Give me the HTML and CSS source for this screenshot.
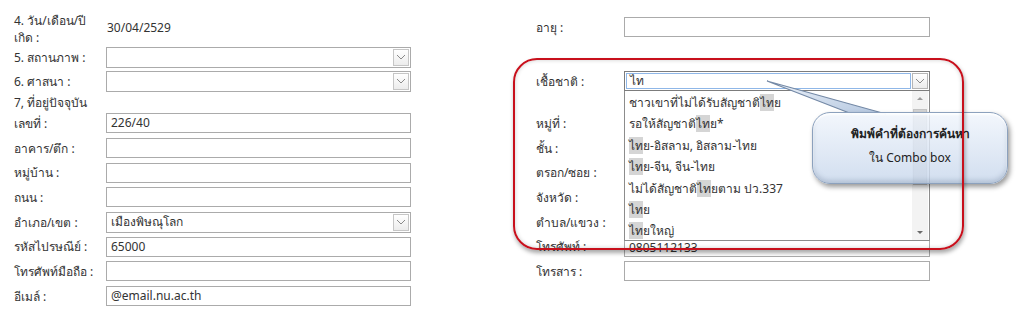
FILE: index.html
```html
<!DOCTYPE html>
<html lang="th">
<head>
    <meta charset="UTF-8">
    <title>ข้อมูลส่วนตัว</title>
    <link rel="stylesheet" href="styles.css">
</head>
<body>
    <div class="page">
        <div class="form">
            <!-- row: birth date / age -->
            <div class="lbl two-line">4. วัน/เดือน/ปี<br>เกิด :</div>
            <div class="val">30/04/2529</div>
            <div></div>
            <div class="lbl">อายุ :</div>
            <div class="field"></div>

            <!-- row: status -->
            <div class="lbl">5. สถานภาพ :</div>
            <div class="field select"><span></span><span class="arrow"><svg width="10" height="6" viewBox="0 0 10 6"><polyline points="1,1 5,5 9,1" fill="none" stroke="#8a8a8a" stroke-width="1"/></svg></span></div>
            <div></div><div></div><div></div>

            <!-- row: religion / nationality -->
            <div class="lbl">6. ศาสนา :</div>
            <div class="field select"><span></span><span class="arrow"><svg width="10" height="6" viewBox="0 0 10 6"><polyline points="1,1 5,5 9,1" fill="none" stroke="#8a8a8a" stroke-width="1"/></svg></span></div>
            <div></div>
            <div class="lbl">เชื้อชาติ :</div>
            <div class="combo">
                <div class="combo-text">ไท</div>
                <span class="arrow"><svg width="10" height="6" viewBox="0 0 10 6"><polyline points="1,1 5,5 9,1" fill="none" stroke="#8a8a8a" stroke-width="1"/></svg></span>
                <div class="combo-list">
                    <ul class="items">
                        <li>ชาวเขาที่ไม่ได้รับสัญชาติ<mark>ไท</mark>ย</li>
                        <li>รอให้สัญชาติ<mark>ไท</mark>ย*</li>
                        <li><mark>ไท</mark>ย-อิสลาม, อิสลาม-ไทย</li>
                        <li><mark>ไท</mark>ย-จีน, จีน-ไทย</li>
                        <li>ไม่ได้สัญชาติ<mark>ไท</mark>ยตาม ปว.337</li>
                        <li><mark>ไท</mark>ย</li>
                        <li><mark>ไท</mark>ยใหญ่</li>
                    </ul>
                    <div class="scrollbar">
                        <span class="sb-up"></span>
                        <span class="sb-thumb"></span>
                        <span class="sb-down"></span>
                    </div>
                </div>
            </div>

            <!-- address heading -->
            <div class="lbl heading">7, ที่อยู่ปัจจุบัน</div>
            <div></div><div></div><div></div>

            <div class="lbl">เลขที่ :</div>
            <div class="field">226/40</div>
            <div></div>
            <div class="lbl">หมู่ที่ :</div>
            <div class="field"></div>

            <div class="lbl">อาคาร/ตึก :</div>
            <div class="field"></div>
            <div></div>
            <div class="lbl">ชั้น :</div>
            <div class="field"></div>

            <div class="lbl">หมู่บ้าน :</div>
            <div class="field"></div>
            <div></div>
            <div class="lbl">ตรอก/ซอย :</div>
            <div class="field"></div>

            <div class="lbl">ถนน :</div>
            <div class="field"></div>
            <div></div>
            <div class="lbl">จังหวัด :</div>
            <div class="field"></div>

            <div class="lbl">อำเภอ/เขต :</div>
            <div class="field select"><span>เมืองพิษณุโลก</span><span class="arrow"><svg width="10" height="6" viewBox="0 0 10 6"><polyline points="1,1 5,5 9,1" fill="none" stroke="#8a8a8a" stroke-width="1"/></svg></span></div>
            <div></div>
            <div class="lbl">ตำบล/แขวง :</div>
            <div class="field"></div>

            <div class="lbl">รหัสไปรษณีย์ :</div>
            <div class="field">65000</div>
            <div></div>
            <div class="lbl">โทรศัพท์ :</div>
            <div class="field low">0805112133</div>

            <div class="lbl">โทรศัพท์มือถือ :</div>
            <div class="field"></div>
            <div></div>
            <div class="lbl">โทรสาร :</div>
            <div class="field"></div>

            <div class="lbl">อีเมล์ :</div>
            <div class="field">@email.nu.ac.th</div>
            <div></div><div></div><div></div>
        </div>

        <!-- annotation overlay -->
        <svg class="tail" width="140" height="44" viewBox="0 0 140 44">
            <defs>
                <linearGradient id="tailFill" x1="0" y1="0" x2="1" y2="1">
                    <stop offset="0" stop-color="#eef3fa"/>
                    <stop offset="1" stop-color="#b3c6df"/>
                </linearGradient>
            </defs>
            <path d="M7 5 L92 38 L126 38 Z" fill="url(#tailFill)"/>
            <path d="M92 38 L7 5 L126 38" fill="none" stroke="#7489a6" stroke-width="1.2"/>
        </svg>
        <div class="callout">
            <p class="callout-title">พิมพ์คำที่ต้องการค้นหา</p>
            <p>ใน Combo box</p>
        </div>
        <div class="highlight-box"></div>
    </div>
</body>
</html>
```

FILE: styles.css
```css
* {
    margin: 0;
    padding: 0;
    box-sizing: border-box;
}

body {
    font-family: Tahoma, "Noto Sans", "DejaVu Sans", sans-serif;
    font-size: 12px;
    color: #333;
    background: #fff;
}

.page {
    position: relative;
    width: 1024px;
    height: 333px;
    overflow: hidden;
    padding: 9px 0 0 14px;
}

.form {
    display: grid;
    grid-template-columns: 92px 305px 125px 88px 306px;
    grid-template-rows: 36px 24px 24px 18px repeat(8, 24.7px);
    align-items: center;
}

.lbl {
    white-space: nowrap;
}

.two-line {
    line-height: 17px;
    padding-top: 3px;
}

.heading {
    grid-column: span 2;
}

.val {
    padding-left: 1px;
}

.field {
    height: 20px;
    border: 1px solid #ababab;
    padding: 0 4px;
    line-height: 18px;
    background: #fff;
}

.field.low {
    line-height: 20px;
}

.select {
    display: flex;
    justify-content: space-between;
    align-items: center;
    height: 21px;
    padding-right: 1px;
}

.arrow {
    width: 16px;
    height: 17px;
    border: 1px solid #c6c6c6;
    background: linear-gradient(#ffffff, #ececec);
    display: flex;
    justify-content: center;
    align-items: center;
}

.combo {
    position: relative;
    display: flex;
    align-items: center;
    gap: 1px;
    height: 20px;
    border: 1px solid #7c7c7c;
    padding: 0 1px;
}

.combo-text {
    flex: 1;
    height: 16px;
    border: 1px solid #8fb7e8;
    line-height: 14px;
    padding-left: 3px;
}

.combo .arrow {
    height: 16px;
    border-color: #b5b5b5;
}

.combo-list {
    position: absolute;
    top: 19px;
    left: -1px;
    width: 306px;
    height: 150px;
    display: flex;
    background: #fff;
    border: 1px solid #8c8c8c;
    border-top: none;
    z-index: 2;
}

.items {
    flex: 1;
    list-style: none;
    padding-top: 1px;
}

.items li {
    height: 21.4px;
    line-height: 21.4px;
    padding-left: 4px;
    white-space: nowrap;
}

mark {
    background: #d5d5d5;
    color: inherit;
}

.scrollbar {
    width: 16px;
    margin-right: 1px;
    background: #f3f3f3;
    display: flex;
    flex-direction: column;
    align-items: center;
    padding: 6px 0 6px;
}

.sb-up,
.sb-down {
    width: 0;
    height: 0;
    border-left: 3px solid transparent;
    border-right: 3px solid transparent;
}

.sb-up {
    border-bottom: 3px solid #9a9a9a;
}

.sb-down {
    border-top: 3px solid #6a6a6a;
    margin-top: auto;
}

.sb-thumb {
    width: 14px;
    height: 76px;
    margin-top: 9px;
    background: #d4d4d4;
    border: 1px solid #c4c4c4;
}

.tail {
    position: absolute;
    left: 760px;
    top: 76px;
    z-index: 3;
}

.callout {
    position: absolute;
    left: 812px;
    top: 112px;
    width: 196px;
    height: 72px;
    border-radius: 18px;
    border: 1px solid #8ca1bd;
    background: linear-gradient(rgba(240, 245, 252, 0.82), rgba(200, 215, 236, 0.82));
    box-shadow: 2px 3px 5px rgba(0, 0, 0, 0.4), inset 0 2px 2px rgba(255, 255, 255, 0.9), inset 0 -3px 4px rgba(90, 110, 140, 0.25);
    text-align: center;
    color: #222;
    z-index: 4;
    padding-top: 9px;
}

.callout p {
    line-height: 24px;
}

.callout-title {
    font-weight: bold;
}

.highlight-box {
    position: absolute;
    left: 513px;
    top: 58px;
    width: 451px;
    height: 192px;
    border: 2px solid #c8101c;
    border-radius: 24px;
    box-shadow: 1px 3px 4px rgba(0, 0, 0, 0.35), inset 0 0 4px rgba(0, 0, 0, 0.2);
    z-index: 5;
}
```
